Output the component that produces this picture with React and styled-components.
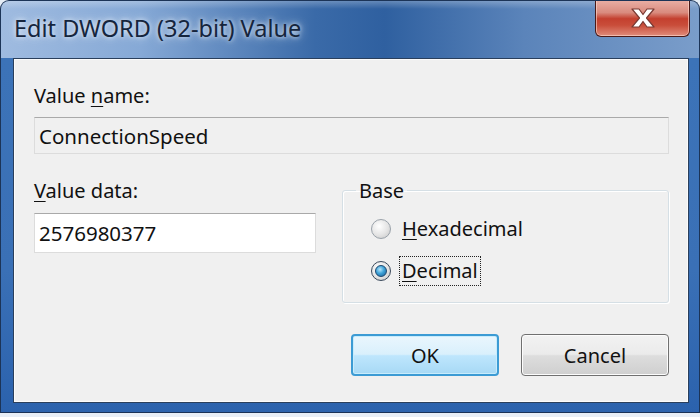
import React from 'react';
import styled, { createGlobalStyle } from 'styled-components';

const GlobalStyle = createGlobalStyle`
  html, body {
    margin: 0;
    padding: 0;
    background: #e6edf6;
  }
  body {
    font-family: "Noto Sans", "Open Sans", sans-serif;
  }
`;

const Window = styled.div`
  width: 700px;
  height: 413px;
  box-sizing: border-box;
  border-radius: 9px 9px 0 0;
  border: 1px solid #1c3457;
  border-bottom-color: #183056;
  background:
    linear-gradient(to bottom, rgba(255,255,255,0.25) 0, rgba(255,255,255,0) 8px),
    linear-gradient(to right, #9fbbe0 0%, #86a9d6 20%, #3a6aa8 45%, #2f60a0 55%, #5b84ba 75%, #7a9dca 100%);
  display: flex;
  flex-direction: column;
  overflow: hidden;
`;

const TitleBar = styled.div`
  height: 57px;
  display: flex;
  align-items: flex-start;
  justify-content: space-between;
  padding-left: 13px;
  padding-right: 9px;
`;

const Title = styled.div`
  margin-top: 11px;
  font-size: 23.5px;
  color: #15253d;
  text-shadow: 0 0 10px rgba(235, 242, 250, 0.9), 0 0 4px rgba(235, 242, 250, 0.8);
`;

const CloseButton = styled.div`
  width: 95px;
  height: 37px;
  margin-top: -1px;
  box-sizing: border-box;
  border: 1px solid #4a1a18;
  border-top: none;
  border-radius: 0 0 6px 6px;
  background: linear-gradient(to bottom, #eab0a6 0%, #d98b7e 35%, #c4402f 52%, #c94d3a 70%, #e08c7b 100%);
  box-shadow: inset 0 0 0 1px rgba(255, 220, 210, 0.6);
  display: flex;
  align-items: center;
  justify-content: center;
`;

const Frame = styled.div`
  flex: 1;
  display: flex;
  padding: 0 10px 9px 12px;
  background: linear-gradient(to bottom, #3c73b8 0%, #3a70b6 60%, #2b62ad 100%);
`;

const Client = styled.div`
  flex: 1;
  box-sizing: border-box;
  border: 1px solid #2a3f5c;
  background: #f0f0f0;
  box-shadow: inset 0 0 0 1px #fbfbfb;
  padding: 22px 19px 0 20px;
  display: flex;
  flex-direction: column;
  font-size: 20px;
  color: #111;
`;

const Label = styled.div`
  height: 30px;
  line-height: 30px;
  margin-bottom: ${p => p.gap || 0}px;
  u {
    text-decoration-thickness: 1px;
    text-underline-offset: 3px;
  }
`;

const Field = styled.div`
  box-sizing: border-box;
  height: ${p => p.h || 38}px;
  width: ${p => (p.w ? `${p.w}px` : 'auto')};
  border: 1px solid #dcdcdc;
  border-top-color: #a9a9a9;
  background: ${p => (p.readOnly ? '#f0f0f0' : '#ffffff')};
  padding-left: 4px;
  display: flex;
  align-items: center;
  font-size: 20.5px;
`;

const Row = styled.div`
  display: flex;
  margin-top: 22px;
`;

const LeftCol = styled.div`
  width: 282px;
  display: flex;
  flex-direction: column;
`;

const GroupBox = styled.fieldset`
  margin: 1px 0 0 26px;
  width: 327px;
  height: 126px;
  box-sizing: border-box;
  border: 1px solid #d5dfe5;
  border-radius: 3px;
  box-shadow: inset 1px 1px 0 #fff, 1px 1px 0 #fff;
  padding: 10px 0 0 28px;
  display: flex;
  flex-direction: column;
  gap: 12px;
  legend {
    padding: 0 3px;
    margin-left: -15px;
    font-size: 20px;
  }
`;

const RadioRow = styled.div`
  display: flex;
  align-items: center;
  height: 30px;
  gap: 9px;
`;

const RadioCircle = styled.span`
  width: 20px;
  height: 20px;
  box-sizing: border-box;
  border-radius: 50%;
  border: 1px solid ${p => (p.checked ? '#3b4a5c' : '#9aa2aa')};
  background: radial-gradient(circle at 40% 35%, #ffffff 0%, #e4e4e4 55%, #c4c4c4 100%);
  display: flex;
  align-items: center;
  justify-content: center;
  &::after {
    content: '';
    display: ${p => (p.checked ? 'block' : 'none')};
    width: 10px;
    height: 10px;
    border-radius: 50%;
    border: 1px solid #1d4a72;
    background: radial-gradient(circle at 40% 35%, #b9e6fb 0%, #3ea3d8 45%, #195c93 100%);
  }
`;

const RadioText = styled.span`
  padding: 0 2px;
  outline: ${p => (p.focused ? '1px dotted #222' : 'none')};
  line-height: 28px;
  u {
    text-decoration-thickness: 1px;
    text-underline-offset: 3px;
  }
`;

const Buttons = styled.div`
  display: flex;
  justify-content: flex-end;
  gap: 22px;
  margin-top: 31px;
`;

const Button = styled.div`
  width: 148px;
  height: 42px;
  box-sizing: border-box;
  border-radius: 4px;
  display: flex;
  align-items: center;
  justify-content: center;
  font-size: 20px;
  color: #111;
  border: ${p => (p.primary ? '2px solid #3c9bd4' : '1px solid #707070')};
  background: ${p =>
    p.primary
      ? 'linear-gradient(to bottom, #eaf6fd 0%, #d9f0fc 48%, #bee6fd 52%, #a7d9f5 100%)'
      : 'linear-gradient(to bottom, #f2f2f2 0%, #ebebeb 48%, #dddddd 52%, #cfcfcf 100%)'};
  box-shadow: ${p => (p.primary ? 'inset 0 0 0 1px #c8ecfc' : 'inset 0 0 0 1px #fcfcfc')};
`;

function CloseGlyph() {
  return (
    <svg width="30" height="22" viewBox="0 0 30 22">
      <path
        d="M4 2 H11 L15 7.5 L19 2 H26 L18.5 11 L26 20 H19 L15 14.5 L11 20 H4 L11.5 11 Z"
        fill="#ffffff"
        stroke="#7a3a33"
        strokeWidth="1.2"
        strokeLinejoin="round"
      />
    </svg>
  );
}

export default function App() {
  return (
    <>
      <GlobalStyle />
      <Window>
        <TitleBar>
          <Title>Edit DWORD (32-bit) Value</Title>
          <CloseButton>
            <CloseGlyph />
          </CloseButton>
        </TitleBar>
        <Frame>
          <Client>
            <Label gap={6}>Value <u>n</u>ame:</Label>
            <Field readOnly h={37}>ConnectionSpeed</Field>
            <Row>
              <LeftCol>
                <Label gap={7}><u>V</u>alue data:</Label>
                <Field w={282} h={40}>2576980377</Field>
              </LeftCol>
              <GroupBox>
                <legend>Base</legend>
                <RadioRow>
                  <RadioCircle />
                  <RadioText><u>H</u>exadecimal</RadioText>
                </RadioRow>
                <RadioRow>
                  <RadioCircle checked />
                  <RadioText focused><u>D</u>ecimal</RadioText>
                </RadioRow>
              </GroupBox>
            </Row>
            <Buttons>
              <Button primary>OK</Button>
              <Button>Cancel</Button>
            </Buttons>
          </Client>
        </Frame>
      </Window>
    </>
  );
}
